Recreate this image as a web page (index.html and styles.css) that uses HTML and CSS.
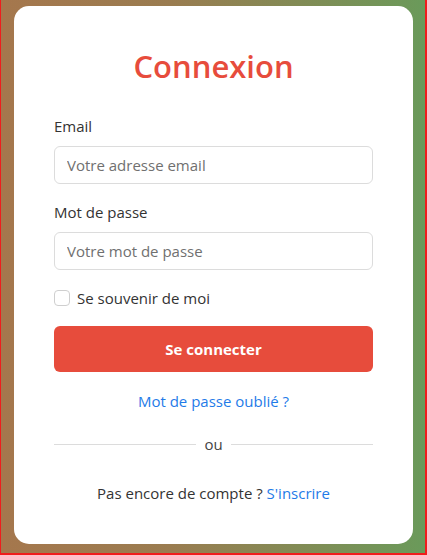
FILE: index.html
```html
<!DOCTYPE html>
<html lang="fr">
<head>
<meta charset="utf-8">
<title>Connexion</title>
<link rel="stylesheet" href="styles.css">
</head>
<body>
<div class="page">
  <form class="card">
    <h1 class="title">Connexion</h1>
    <label class="label" for="email">Email</label>
    <input class="input" id="email" type="email" placeholder="Votre adresse email">
    <label class="label label-second" for="pwd">Mot de passe</label>
    <input class="input" id="pwd" type="password" placeholder="Votre mot de passe">
    <label class="remember"><input type="checkbox" class="check"><span>Se souvenir de moi</span></label>
    <button type="button" class="btn">Se connecter</button>
    <a class="forgot" href="#">Mot de passe oublié ?</a>
    <div class="divider"><span class="line"></span><span class="ou">ou</span><span class="line"></span></div>
    <p class="signup">Pas encore de compte ? <a href="#" class="link">S'inscrire</a></p>
  </form>
</div>
</body>
</html>
```
FILE: styles.css
```css
html, body {
  margin: 0;
  padding: 0;
}
body {
  font-family: "Open Sans", "Noto Sans", sans-serif;
  color: #333;
}
.page {
  box-sizing: border-box;
  height: 555px;
  padding: 6px 12px 0 13px;
  background: linear-gradient(to right, #a5774d, #9a7c50 40%, #6a9a5a);
  border-left: 1px solid #f01c1c;
  border-right: 2px solid #f01c1c;
  border-bottom: 2px solid #f01c1c;
  display: flex;
  justify-content: center;
  align-items: flex-start;
}
.card {
  box-sizing: border-box;
  width: 399px;
  height: 538px;
  background: #fff;
  border-radius: 15px;
  padding: 40px 40px 0 40px;
  display: flex;
  flex-direction: column;
}
.title {
  margin: 0 0 28px 0;
  font-size: 31px;
  line-height: 40px;
  font-weight: 600;
  color: #e74c3c;
  text-align: center;
}
.label {
  font-size: 15px;
  line-height: 24px;
  color: #333;
  margin-bottom: 8px;
}
.label-second {
  margin-top: 16px;
}
.input {
  box-sizing: border-box;
  height: 38px;
  border: 1px solid #dcdcdc;
  border-radius: 6px;
  padding: 0 12px;
  font-family: inherit;
  font-size: 15px;
  color: #333;
  outline: none;
}
.input::placeholder {
  color: #707070;
}
.remember {
  margin-top: 16px;
  display: flex;
  align-items: center;
  gap: 7px;
  font-size: 15px;
  line-height: 24px;
  color: #333;
}
.check {
  appearance: none;
  -webkit-appearance: none;
  margin: 0;
  width: 16px;
  height: 16px;
  border: 1px solid #cfcfcf;
  border-radius: 4px;
  background: #fff;
}
.btn {
  margin-top: 16px;
  height: 46px;
  border: none;
  border-radius: 6px;
  background: #e74c3c;
  color: #fff;
  font-family: inherit;
  font-size: 15px;
  font-weight: 700;
}
.forgot {
  margin-top: 17px;
  align-self: center;
  font-size: 15px;
  line-height: 24px;
  color: #1f7be8;
  text-decoration: none;
}
.divider {
  margin-top: 19px;
  display: flex;
  align-items: center;
  gap: 8px;
  height: 24px;
}
.line {
  flex: 1;
  height: 1px;
  background: #dcdcdc;
}
.ou {
  font-size: 15px;
  color: #444;
}
.signup {
  margin: 25px 0 0 0;
  text-align: center;
  font-size: 15px;
  line-height: 24px;
  color: #333;
}
.link {
  color: #1f7be8;
  text-decoration: none;
}
```
